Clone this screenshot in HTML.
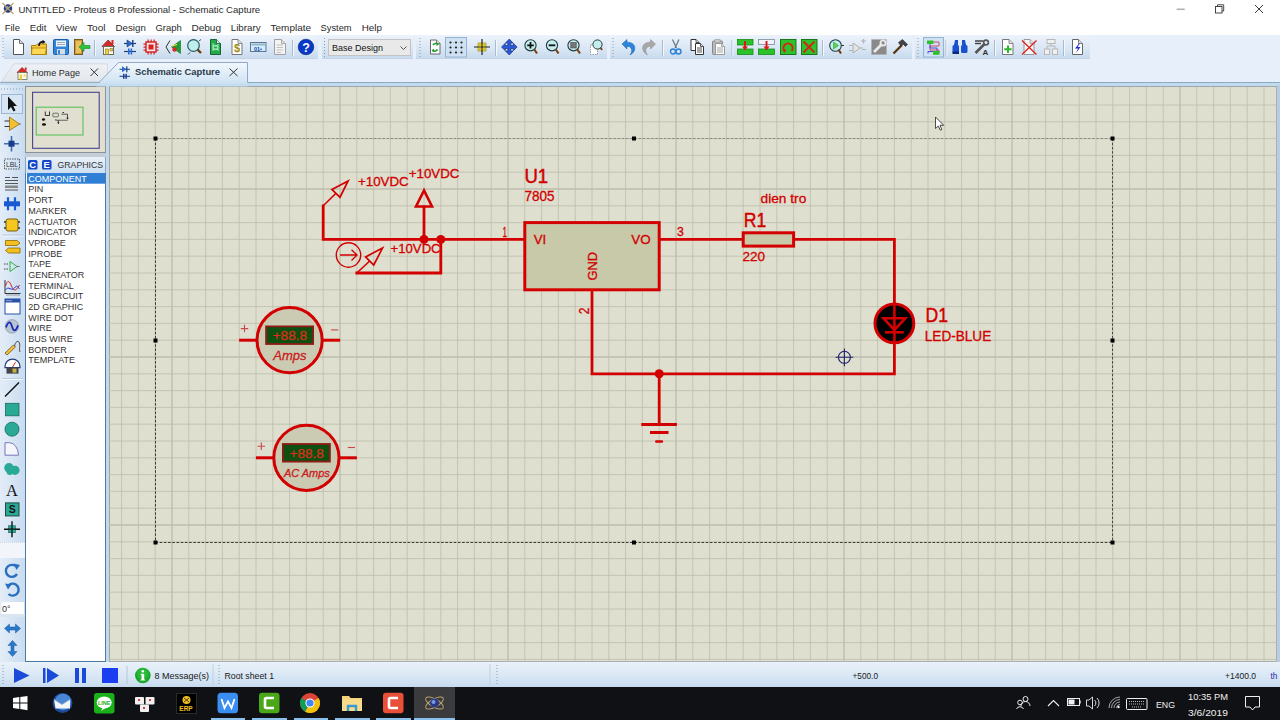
<!DOCTYPE html>
<html><head><meta charset="utf-8">
<style>
*{margin:0;padding:0;box-sizing:border-box}
html,body{width:1280px;height:720px;overflow:hidden;background:#fff;font-family:"Liberation Sans",sans-serif}
.a{position:absolute}
#title{left:0;top:0;width:1280px;height:17px;background:#fff}
#menu{left:0;top:17px;width:1280px;height:18px;background:#fff}
.mi{position:absolute;top:21px;font-size:9.7px;color:#1a1a1a;white-space:nowrap}
#rebar{left:0;top:35px;width:1280px;height:48px;background:#e7f0fa}
.band{position:absolute;top:35px;height:24px;background:linear-gradient(#edf3fb,#d9e6f4 60%,#c9dbee);border-bottom:1px solid #c4d4e6}
#frame{left:0;top:82px;width:1280px;height:5px;background:#c0daee;border-top:1px solid #8eaac2}
#lefttb{left:0;top:85px;width:25px;height:577px;background:linear-gradient(90deg,#e3edf8,#c9dcf0)}
#ovw{left:25px;top:86.3px;width:80.8px;height:66.7px;background:#e0dfd0;border:1px solid #8a9298}
#gap1{left:25px;top:153px;width:81px;height:4px;background:#c3ced8}
#ghead{left:25px;top:157px;width:81px;height:16px;background:linear-gradient(#e9f1f9,#cddff0);border-left:1px solid #8aa4c0;border-right:1px solid #8aa4c0}
#glist{left:25.2px;top:173px;width:80.6px;height:488.5px;background:#fff;border:1.6px solid #4f79a6;border-top:none}
#cgap{left:105.5px;top:85px;width:4px;height:578px;background:#c2d9eb}
#canvas{left:108.7px;top:86.3px;width:1168.5px;height:575.5px;background:#dfdfcf;border-left:1px solid #9ea6aa;border-top:1px solid #9ea6aa;border-bottom:1px solid #a8b0b4;border-right:1px solid #a8b0b4}
#rgap{left:1277px;top:85px;width:3px;height:578px;background:#b8cde3}
#status{left:0;top:662px;width:1280px;height:25px;background:linear-gradient(#eaf2fa,#d4e4f3 70%,#c6daee)}
#taskbar{left:0;top:687px;width:1280px;height:33px;background:#101114}
.li{position:absolute;left:3px;font-size:9.5px;color:#222;white-space:nowrap;line-height:10.68px}
</style></head><body>
<div id="title" class="a"></div>
<div id="menu" class="a"></div>
<div id="rebar" class="a"></div>
<div class="band" style="left:4px;width:314px"></div>
<div class="band" style="left:322px;width:91px"></div>
<div class="band" style="left:416px;width:191px"></div>
<div class="band" style="left:610px;width:302px"></div>
<div class="band" style="left:915px;width:175px"></div>
<svg class="a" style="left:0;top:0;font-family:'Liberation Sans',sans-serif" width="1280" height="720" viewBox="0 0 1280 720">
<line x1="3" y1="38" x2="3" y2="57" stroke="#8a9cb0" stroke-width="1" stroke-dasharray="1 2"/>
<g transform="translate(13,39)"><path d="M0.5 0.5 H6.5 L10.5 4.5 V15.5 H0.5 Z" fill="#fff" stroke="#555" stroke-width="1"/><path d="M6.5 0.5 V4.5 H10.5" fill="#ddd" stroke="#555" stroke-width="0.8"/></g>
<g transform="translate(31,39)"><path d="M0.5 6.5 H5 L6.5 5 H15.5 V15.5 H0.5 Z" fill="#f5c83a" stroke="#a8800a"/><path d="M1 9 H15.5 L14 15.5 H0.5 Z" fill="#ffd955" stroke="#a8800a" stroke-width="0.8"/><path d="M8 7 C8 3.5 10 2.5 12.5 3" fill="none" stroke="#111" stroke-width="1.6"/><path d="M11.5 0.8 L14.5 3 L11.5 5 Z" fill="#111"/></g>
<g transform="translate(53,39)"><rect x="0.5" y="0.5" width="15" height="15" rx="1" fill="#2f86d8" stroke="#1c5fa8"/><rect x="3" y="1.5" width="10" height="6" fill="#eef4fa"/><line x1="4" y1="3.5" x2="12" y2="3.5" stroke="#99aabb"/><line x1="4" y1="5.5" x2="12" y2="5.5" stroke="#99aabb"/><rect x="4" y="10" width="8" height="5.5" fill="#d8dde4"/><rect x="5" y="11" width="2" height="4" fill="#2f86d8"/></g>
<g transform="translate(74,39)"><rect x="0.5" y="0.5" width="8" height="15" fill="#c99a3a" stroke="#7a5a18"/><rect x="2" y="2" width="5" height="12" fill="#e8c060"/><path d="M5 8 L10 3.5 V6.5 H16 V9.5 H10 V12.5 Z" fill="#2cc23c" stroke="#168a22" stroke-width="0.6"/></g>
<line x1="94.5" y1="40" x2="94.5" y2="56" stroke="#a9bccf" stroke-width="1"/>
<line x1="95.5" y1="40" x2="95.5" y2="56" stroke="#f4f8fc" stroke-width="1"/>
<g transform="translate(102,39)"><path d="M0 7.5 L6.2 1 L12.5 7.5 Z" fill="#d42a2a" stroke="#901818" stroke-width="0.8"/><rect x="9.5" y="1" width="2" height="4" fill="#d42a2a"/><rect x="1.5" y="7.5" width="10" height="8" fill="#fffdf0" stroke="#6b6b5a"/><rect x="3.5" y="10" width="3" height="5.5" fill="#f0d040" stroke="#807030" stroke-width="0.6"/><rect x="8" y="9.5" width="2.5" height="2.5" fill="#f0d040" stroke="#807030" stroke-width="0.6"/></g>
<g transform="translate(124,39)"><line x1="0" y1="4.5" x2="12" y2="4.5" stroke="#1a3f7a" stroke-width="1.2"/><path d="M3 1 L3 8 L8.5 4.5 Z" fill="#2a6ad0" stroke="#1a3f7a" stroke-width="0.6"/><line x1="8.8" y1="1" x2="8.8" y2="8" stroke="#1a3f7a" stroke-width="1.4"/><line x1="0" y1="12.5" x2="12" y2="12.5" stroke="#1a3f7a" stroke-width="1.2"/><rect x="4" y="9.5" width="1.6" height="6" fill="#2a6ad0"/><rect x="6.6" y="9.5" width="1.6" height="6" fill="#2a6ad0"/></g>
<g transform="translate(143,39)"><rect x="3" y="3" width="10" height="10" fill="#fbe4e4" stroke="#d02020" stroke-width="1.4"/><rect x="5.5" y="5.5" width="5" height="5" fill="#d82020"/><rect x="4.5" y="0.5" width="1.2" height="2.5" fill="#d02020"/><rect x="4.5" y="13" width="1.2" height="2.5" fill="#d02020"/><rect x="0.5" y="4.5" width="2.5" height="1.2" fill="#d02020"/><rect x="13" y="4.5" width="2.5" height="1.2" fill="#d02020"/><rect x="7.5" y="0.5" width="1.2" height="2.5" fill="#d02020"/><rect x="7.5" y="13" width="1.2" height="2.5" fill="#d02020"/><rect x="0.5" y="7.5" width="2.5" height="1.2" fill="#d02020"/><rect x="13" y="7.5" width="2.5" height="1.2" fill="#d02020"/><rect x="10.5" y="0.5" width="1.2" height="2.5" fill="#d02020"/><rect x="10.5" y="13" width="1.2" height="2.5" fill="#d02020"/><rect x="0.5" y="10.5" width="2.5" height="1.2" fill="#d02020"/><rect x="13" y="10.5" width="2.5" height="1.2" fill="#d02020"/></g>
<g transform="translate(165,39)"><path d="M5 1.5 L1 8 L5 14.5" fill="none" stroke="#333" stroke-width="1"/><path d="M15.5 1.5 L6.5 8 L15.5 14.5 Z" fill="#1e9e32" stroke="#0e6e1e" stroke-width="0.6"/><circle cx="9.5" cy="10.5" r="2.2" fill="#d82a2a"/><path d="M7 7 L12 5.5" stroke="#ffe040" stroke-width="1.2"/></g>
<g transform="translate(187,39)"><circle cx="6.5" cy="6.5" r="5.8" fill="#bfeeee" stroke="#2a5a60" stroke-width="1.2"/><path d="M10.5 10.5 L14 14" stroke="#6a3a10" stroke-width="2.4"/><path d="M3 13.5 L1 15.5 M12 2 L14 0.5" stroke="#2a5a60" stroke-width="1"/></g>
<g transform="translate(210,39)"><path d="M0.5 0.5 H6.5 L10.5 4.5 V15.5 H0.5 Z" fill="#24a84a" stroke="#17663a" stroke-width="1"/><path d="M6.5 0.5 V4.5 H10.5" fill="#ddd" stroke="#17663a" stroke-width="0.8"/><path d="M3 4 V12 M8 5 V12 M3 7 H8 M3 10 H8" stroke="#a6f0c0" stroke-width="1"/><circle cx="5.5" cy="8.5" r="2.2" fill="none" stroke="#a6f0c0"/></g>
<g transform="translate(231.5,39)"><path d="M0.5 0.5 H6.5 L10.5 4.5 V15.5 H0.5 Z" fill="#fff" stroke="#777" stroke-width="1"/><path d="M6.5 0.5 V4.5 H10.5" fill="#ddd" stroke="#777" stroke-width="0.8"/><text x="5.5" y="13" font-size="11" font-weight="bold" fill="#a08a10" text-anchor="middle">$</text></g>
<g transform="translate(250,42)"><rect x="0.5" y="0.5" width="15.5" height="9" fill="#cfeeff" stroke="#5a7890"/><rect x="1.5" y="1.5" width="13.5" height="2" fill="#9ab4c8"/><text x="8" y="8.5" font-size="5.5" font-weight="bold" fill="#2040a0" text-anchor="middle">01&#8226;</text></g>
<g transform="translate(274,39)"><path d="M0.5 0.5 H7.5 L11.5 4.5 V15.5 H0.5 Z" fill="#f4f4f4" stroke="#a0a0a0" stroke-width="1"/><path d="M7.5 0.5 V4.5 H11.5" fill="#ddd" stroke="#a0a0a0" stroke-width="0.8"/><path d="M2.5 6 H9 M2.5 8.5 H9 M2.5 11 H9 M2.5 13.5 H7" stroke="#c0c0c0" stroke-width="1"/></g>
<line x1="292.5" y1="40" x2="292.5" y2="56" stroke="#a9bccf" stroke-width="1"/>
<line x1="293.5" y1="40" x2="293.5" y2="56" stroke="#f4f8fc" stroke-width="1"/>
<g transform="translate(298,39)"><circle cx="8" cy="8" r="7.8" fill="#0838c8" stroke="#06247a" stroke-width="0.6"/><text x="8" y="12.8" font-size="12.5" font-weight="bold" fill="#fff" text-anchor="middle">?</text></g>
<line x1="324.5" y1="38" x2="324.5" y2="57" stroke="#8a9cb0" stroke-width="1" stroke-dasharray="1 2"/>
<rect x="328.5" y="39.5" width="82" height="16" fill="#e9e9e9" stroke="#c4c4c4"/>
<text x="332" y="51" font-size="9" fill="#111" textLength="51" lengthAdjust="spacingAndGlyphs">Base Design</text>
<path d="M400.5 46.5 L403.5 49.5 L406.5 46.5" fill="none" stroke="#444" stroke-width="0.9"/>
<line x1="420" y1="38" x2="420" y2="57" stroke="#8a9cb0" stroke-width="1" stroke-dasharray="1 2"/>
<g transform="translate(430,39.5)"><path d="M0.5 0.5 H6.5 L10.0 4.0 V14.5 H0.5 Z" fill="#fff" stroke="#666" stroke-width="1"/><path d="M6.5 0.5 V4.0 H10.0" fill="#ddd" stroke="#666" stroke-width="0.8"/><path d="M3 5.5 A3.5 3.5 0 0 1 8 4.5" fill="none" stroke="#20a030" stroke-width="1.6"/><path d="M7.5 10 A3.5 3.5 0 0 1 2.5 11" fill="none" stroke="#20a030" stroke-width="1.6"/><path d="M6.5 3 L9 5 L6.5 6.5 Z M4 9 L1.5 11 L4 12.5 Z" fill="#20a030"/></g>
<rect x="445.5" y="37.5" width="21" height="19.5" fill="#cfe1f3" stroke="#94b4d4"/>
<g transform="translate(449,41)"><circle cx="1.5" cy="1.5" r="1.1" fill="#222"/><circle cx="1.5" cy="6.5" r="1.1" fill="#222"/><circle cx="1.5" cy="11.5" r="1.1" fill="#222"/><circle cx="7" cy="1.5" r="1.1" fill="#222"/><circle cx="7" cy="6.5" r="1.1" fill="#222"/><circle cx="7" cy="11.5" r="1.1" fill="#222"/><circle cx="12.5" cy="1.5" r="1.1" fill="#222"/><circle cx="12.5" cy="6.5" r="1.1" fill="#222"/><circle cx="12.5" cy="11.5" r="1.1" fill="#222"/><path d="M1.5 4 V4.2 M7 4 V4.2 M12.5 4 V4.2 M4.2 1.5 H4.4 M9.6 1.5 H9.8 M4.2 6.5 H4.4 M9.6 6.5 H9.8 M4.2 11.5 H4.4 M9.6 11.5 H9.8 M1.5 9 V9.2 M7 9 V9.2 M12.5 9 V9.2" stroke="#555" stroke-width="1"/></g>
<g transform="translate(474,39)"><rect x="4" y="4" width="8" height="8" fill="#f4e040" stroke="#908010" stroke-width="0.6"/><path d="M8 0 V16 M0 8 H16" stroke="#222" stroke-width="1.2"/><path d="M4 6 H12 M4 10 H12 M6 4 V12 M10 4 V12" stroke="#b0a020" stroke-width="0.5"/></g>
<line x1="495.5" y1="40" x2="495.5" y2="56" stroke="#a9bccf" stroke-width="1"/>
<line x1="496.5" y1="40" x2="496.5" y2="56" stroke="#f4f8fc" stroke-width="1"/>
<g transform="translate(501.5,39)"><path d="M7.8 0 L11.5 4 H9.3 V6.5 H11.8 V4.3 L15.6 8 L11.8 11.7 V9.5 H9.3 V12 H11.5 L7.8 16 L4 12 H6.3 V9.5 H3.8 V11.7 L0 8 L3.8 4.3 V6.5 H6.3 V4 H4 Z" fill="#2a5ad8" stroke="#142e80" stroke-width="0.7"/></g>
<g transform="translate(524,39)"><circle cx="6.5" cy="6.3" r="5.6" fill="#c4eeee" stroke="#213a3e" stroke-width="1.1"/><path d="M6.5 3 V9.6 M3.2 6.3 H9.8" stroke="#111" stroke-width="1.8"/><path d="M10 10 L13 14.5" stroke="#7a4418" stroke-width="2.2"/></g>
<g transform="translate(545.5,39)"><circle cx="6.5" cy="6.3" r="5.6" fill="#c4eeee" stroke="#213a3e" stroke-width="1.1"/><path d="M3.2 6.3 H9.8" stroke="#111" stroke-width="1.8"/><path d="M10 10 L13 14.5" stroke="#7a4418" stroke-width="2.2"/></g>
<g transform="translate(567,39)"><circle cx="6.5" cy="6.3" r="5.6" fill="#c4eeee" stroke="#213a3e" stroke-width="1.1"/><rect x="3.8" y="3.6" width="5.4" height="5.4" fill="#777" stroke="#444" stroke-width="0.6"/><path d="M10 10 L13 14.5" stroke="#7a4418" stroke-width="2.2"/></g>
<g transform="translate(590,39)"><rect x="0.5" y="6" width="7" height="9.5" fill="#fff" stroke="#888" stroke-width="0.8" stroke-dasharray="1.5 1"/><circle cx="7.5" cy="5.5" r="4.6" fill="#c4eeee" stroke="#213a3e" stroke-width="1"/><path d="M10.5 8.5 L12 11" stroke="#7a4418" stroke-width="1.8"/></g>
<line x1="613" y1="38" x2="613" y2="57" stroke="#8a9cb0" stroke-width="1" stroke-dasharray="1 2"/>
<g transform="translate(620,39)"><path d="M2 5 L7 0.5 V3.2 C12 3 16 6 14.5 11 C13.8 13.5 12 15 10 15.8 C12 13.5 12.5 10.5 10.5 8.5 C9.5 7.5 8 7.3 7 7.5 V10 Z" fill="#2a86d8" stroke="#1a5aa8" stroke-width="0.5"/></g>
<g transform="translate(641.5,39)"><path d="M14 5 L9 0.5 V3.2 C4 3 0 6 1.5 11 C2.2 13.5 4 15 6 15.8 C4 13.5 3.5 10.5 5.5 8.5 C6.5 7.5 8 7.3 9 7.5 V10 Z" fill="#a8a8a8" stroke="#888" stroke-width="0.5"/></g>
<line x1="662.5" y1="40" x2="662.5" y2="56" stroke="#a9bccf" stroke-width="1"/>
<line x1="663.5" y1="40" x2="663.5" y2="56" stroke="#f4f8fc" stroke-width="1"/>
<g transform="translate(670,39)"><path d="M2.5 0.5 L6.5 9 M9 0.5 L5 9" stroke="#6a7a8a" stroke-width="1.3"/><circle cx="3" cy="12.5" r="2.5" fill="none" stroke="#2a80d8" stroke-width="1.4"/><circle cx="8.5" cy="12.5" r="2.5" fill="none" stroke="#2a80d8" stroke-width="1.4"/></g>
<g transform="translate(690.5,39)"><path d="M0.5 0.5 H5.5 L8.5 3.5 V11.5 H0.5 Z" fill="#fff" stroke="#333" stroke-width="1"/><path d="M5.5 0.5 V3.5 H8.5" fill="#ddd" stroke="#333" stroke-width="0.8"/><g transform="translate(4.5,4)"><path d="M0.5 0.5 H5.5 L8.5 3.5 V11.5 H0.5 Z" fill="#fff" stroke="#333" stroke-width="1"/><path d="M5.5 0.5 V3.5 H8.5" fill="#ddd" stroke="#333" stroke-width="0.8"/><path d="M2 5 H7 M2 7 H7 M2 9 H7" stroke="#555"/></g></g>
<g transform="translate(712,39)"><rect x="0.5" y="2" width="10" height="13.5" rx="1" fill="#bbb" stroke="#888"/><rect x="3" y="0.5" width="5" height="3" fill="#ccc" stroke="#999" stroke-width="0.6"/><g transform="translate(3,4)"><path d="M0.5 0.5 H6.5 L9.5 3.5 V11.5 H0.5 Z" fill="#fafafa" stroke="#999" stroke-width="1"/><path d="M6.5 0.5 V3.5 H9.5" fill="#ddd" stroke="#999" stroke-width="0.8"/><path d="M2 5 H8 M2 7 H8 M2 9 H8" stroke="#aaa"/></g></g>
<line x1="732" y1="40" x2="732" y2="56" stroke="#a9bccf" stroke-width="1"/>
<line x1="733" y1="40" x2="733" y2="56" stroke="#f4f8fc" stroke-width="1"/>
<g transform="translate(737,39)"><rect x="0.5" y="0.5" width="15.5" height="5.5" fill="#2ac42a" stroke="#168a16" stroke-width="0.8"/><rect x="0.5" y="10" width="15.5" height="5.5" fill="#2ac42a" stroke="#168a16" stroke-width="0.8"/><path d="M7 2 H9 V7.5 H11 L8 11.5 L5 7.5 H7 Z" fill="#e01818"/></g>
<g transform="translate(758,39)"><rect x="0.5" y="0.5" width="16" height="5" fill="#f0f4f8" stroke="#7a8a9a" stroke-width="0.8"/><rect x="0.5" y="10" width="16" height="5.5" fill="#2ac42a" stroke="#168a16" stroke-width="0.8"/><path d="M7.5 2 H9.5 V7.5 H11.5 L8.5 11.5 L5.5 7.5 H7.5 Z" fill="#e01818"/></g>
<g transform="translate(780,39)"><rect x="0.5" y="0.5" width="15.5" height="15" fill="#2ac42a" stroke="#0e6e0e" stroke-width="0.9"/><path d="M4.5 12 A4.6 4.6 0 1 1 11.5 12" fill="none" stroke="#d82018" stroke-width="2"/><path d="M2.5 11 L4.8 14 L6.5 10.5 Z" fill="#d82018"/></g>
<g transform="translate(801,39)"><rect x="0.5" y="0.5" width="15.5" height="15" fill="#2ac42a" stroke="#0e6e0e" stroke-width="0.9"/><path d="M2.5 2.5 L13.5 13.5 M13.5 2.5 L2.5 13.5" stroke="#d82018" stroke-width="1.8"/></g>
<line x1="822.5" y1="40" x2="822.5" y2="56" stroke="#a9bccf" stroke-width="1"/>
<line x1="823.5" y1="40" x2="823.5" y2="56" stroke="#f4f8fc" stroke-width="1"/>
<g transform="translate(829,39)"><circle cx="6.5" cy="6.5" r="5.8" fill="#c4eeee" stroke="#213a3e" stroke-width="1.1"/><path d="M4.5 3 L9.5 6.5 L4.5 10 Z" fill="#5ad25a" stroke="#2a8a2a" stroke-width="0.5"/><path d="M12.5 6.5 H15" stroke="#333"/><path d="M9.5 10.5 L12 14.5" stroke="#6a3a10" stroke-width="2"/></g>
<g transform="translate(849,39)"><path d="M4 4 L11 9 L4 14 Z" fill="#e4e4e4" stroke="#b0b0b0"/><path d="M0 6.5 H4 M0 11.5 H4 M11 9 H14 M12 2 H17 M14.5 0 V4.5 M13 10.5 H17" stroke="#b4b4b4" stroke-width="1.2"/></g>
<g transform="translate(871,39)"><rect x="0.5" y="0.5" width="15" height="15" fill="#8a8a8a" stroke="#b0b0b0" stroke-dasharray="1 1"/><path d="M3 13 L11 5" stroke="#eaeaea" stroke-width="2.6"/><circle cx="12" cy="4" r="2.6" fill="none" stroke="#eaeaea" stroke-width="1.8"/></g>
<g transform="translate(892,39)"><path d="M1.5 14.5 L10 6" stroke="#5a3810" stroke-width="2.4"/><path d="M6.5 3.5 L10.5 0.5 L15.5 5.5 L13.5 7.5 L11 5 L9 7 Z" fill="#444" stroke="#222" stroke-width="0.6"/></g>
<line x1="918" y1="38" x2="918" y2="57" stroke="#8a9cb0" stroke-width="1" stroke-dasharray="1 2"/>
<rect x="923.5" y="37.5" width="20" height="19.5" fill="#cfe1f3" stroke="#94b4d4"/>
<g transform="translate(926,40)"><rect x="1" y="0.5" width="6.5" height="3.5" fill="#2ac42a"/><path d="M7.5 2 H13 V6 H4 V10 H13 V13" fill="none" stroke="#d24a6a" stroke-width="1"/><path d="M4 4 V8 H11 V11.5 H2 V13.5" fill="none" stroke="#4a4ad2" stroke-width="1"/><rect x="7" y="11" width="6.5" height="3.8" fill="#2ac42a"/></g>
<line x1="946" y1="40" x2="946" y2="56" stroke="#a9bccf" stroke-width="1"/>
<line x1="947" y1="40" x2="947" y2="56" stroke="#f4f8fc" stroke-width="1"/>
<g transform="translate(952,39)"><path d="M3 1 H6 V6 H2 Z M10 1 H13 L14 6 H10 Z" fill="#1a50d0"/><rect x="0.5" y="6" width="6.5" height="8" rx="1.5" fill="#1a50d0"/><rect x="9" y="6" width="6.5" height="8" rx="1.5" fill="#1a50d0"/><rect x="0.5" y="12.5" width="6.5" height="2.5" fill="#0a2a80"/></g>
<g transform="translate(974,39)"><path d="M1 2 H9 M1 4.5 H7" stroke="#444" stroke-width="1.3"/><path d="M1.5 14 L11 4.5" stroke="#555" stroke-width="2.6"/><circle cx="12" cy="3.5" r="2.4" fill="none" stroke="#555" stroke-width="1.6"/><text x="11.5" y="15.5" font-size="8" font-weight="bold" fill="#333" text-anchor="middle">A</text></g>
<line x1="994.5" y1="40" x2="994.5" y2="56" stroke="#a9bccf" stroke-width="1"/>
<line x1="995.5" y1="40" x2="995.5" y2="56" stroke="#f4f8fc" stroke-width="1"/>
<g transform="translate(1002,39)"><path d="M0.5 0.5 H7.0 L11.0 4.5 V15.5 H0.5 Z" fill="#fff" stroke="#777" stroke-width="1"/><path d="M7.0 0.5 V4.5 H11.0" fill="#ddd" stroke="#777" stroke-width="0.8"/><path d="M6 6.5 V14 M2.3 10.2 H9.7" stroke="#2ab82a" stroke-width="2"/></g>
<g transform="translate(1021.5,39)"><g transform="translate(2,0)"><path d="M0.5 0.5 H6.5 L10.5 4.5 V15.5 H0.5 Z" fill="#f6f6f6" stroke="#999" stroke-width="1"/><path d="M6.5 0.5 V4.5 H10.5" fill="#ddd" stroke="#999" stroke-width="0.8"/></g><path d="M0.5 1.5 L15 15.5 M15 1.5 L0.5 15.5" stroke="#e02020" stroke-width="1.3"/></g>
<g transform="translate(1044,39)"><rect x="3" y="0.5" width="8" height="4" fill="#f0f0f0" stroke="#b8b8b8"/><rect x="0.5" y="10" width="5" height="5.5" fill="#f0f0f0" stroke="#b8b8b8"/><rect x="8.5" y="10" width="5" height="5.5" fill="#f0f0f0" stroke="#b8b8b8"/><path d="M3 10 V7 H11 V10 M7 4.5 V7" fill="none" stroke="#b8b8b8"/></g>
<line x1="1063.5" y1="40" x2="1063.5" y2="56" stroke="#a9bccf" stroke-width="1"/>
<line x1="1064.5" y1="40" x2="1064.5" y2="56" stroke="#f4f8fc" stroke-width="1"/>
<g transform="translate(1072,39)"><path d="M0.5 0.5 H6.5 L10.5 4.5 V15.5 H0.5 Z" fill="#fff" stroke="#666" stroke-width="1"/><path d="M6.5 0.5 V4.5 H10.5" fill="#ddd" stroke="#666" stroke-width="0.8"/><path d="M7 4.5 L3 9.5 H6 L4 14 L8.5 8 H5.5 L8 4.5 Z" fill="#1a2ad8"/></g>
</svg>
<div id="frame" class="a"></div>
<div id="lefttb" class="a"></div>
<div id="ovw" class="a"></div>
<div id="gap1" class="a"></div>
<div id="ghead" class="a"></div>
<div id="glist" class="a"></div>
<div id="cgap" class="a"></div>
<div id="canvas" class="a"></div>
<svg class="a" style="left:0;top:0;font-family:'Liberation Sans',sans-serif" width="1280" height="720" viewBox="0 0 1280 720">
<defs><clipPath id="cc"><rect x="109" y="87" width="1168" height="575"/></clipPath></defs>
<g clip-path="url(#cc)">
<line x1="121.60" y1="87" x2="121.60" y2="662" stroke="#bdbdad" stroke-width="0.8"/>
<line x1="138.40" y1="87" x2="138.40" y2="662" stroke="#bdbdad" stroke-width="0.8"/>
<line x1="155.20" y1="87" x2="155.20" y2="662" stroke="#bdbdad" stroke-width="0.8"/>
<line x1="172.00" y1="87" x2="172.00" y2="662" stroke="#bebeae" stroke-width="1.4"/>
<line x1="188.80" y1="87" x2="188.80" y2="662" stroke="#bdbdad" stroke-width="0.8"/>
<line x1="205.60" y1="87" x2="205.60" y2="662" stroke="#bdbdad" stroke-width="0.8"/>
<line x1="222.40" y1="87" x2="222.40" y2="662" stroke="#bdbdad" stroke-width="0.8"/>
<line x1="239.20" y1="87" x2="239.20" y2="662" stroke="#bdbdad" stroke-width="0.8"/>
<line x1="256.00" y1="87" x2="256.00" y2="662" stroke="#bdbdad" stroke-width="0.8"/>
<line x1="272.80" y1="87" x2="272.80" y2="662" stroke="#bdbdad" stroke-width="0.8"/>
<line x1="289.60" y1="87" x2="289.60" y2="662" stroke="#bdbdad" stroke-width="0.8"/>
<line x1="306.40" y1="87" x2="306.40" y2="662" stroke="#bdbdad" stroke-width="0.8"/>
<line x1="323.20" y1="87" x2="323.20" y2="662" stroke="#bdbdad" stroke-width="0.8"/>
<line x1="340.00" y1="87" x2="340.00" y2="662" stroke="#bebeae" stroke-width="1.4"/>
<line x1="356.80" y1="87" x2="356.80" y2="662" stroke="#bdbdad" stroke-width="0.8"/>
<line x1="373.60" y1="87" x2="373.60" y2="662" stroke="#bdbdad" stroke-width="0.8"/>
<line x1="390.40" y1="87" x2="390.40" y2="662" stroke="#bdbdad" stroke-width="0.8"/>
<line x1="407.20" y1="87" x2="407.20" y2="662" stroke="#bdbdad" stroke-width="0.8"/>
<line x1="424.00" y1="87" x2="424.00" y2="662" stroke="#bdbdad" stroke-width="0.8"/>
<line x1="440.80" y1="87" x2="440.80" y2="662" stroke="#bdbdad" stroke-width="0.8"/>
<line x1="457.60" y1="87" x2="457.60" y2="662" stroke="#bdbdad" stroke-width="0.8"/>
<line x1="474.40" y1="87" x2="474.40" y2="662" stroke="#bdbdad" stroke-width="0.8"/>
<line x1="491.20" y1="87" x2="491.20" y2="662" stroke="#bdbdad" stroke-width="0.8"/>
<line x1="508.00" y1="87" x2="508.00" y2="662" stroke="#bebeae" stroke-width="1.4"/>
<line x1="524.80" y1="87" x2="524.80" y2="662" stroke="#bdbdad" stroke-width="0.8"/>
<line x1="541.60" y1="87" x2="541.60" y2="662" stroke="#bdbdad" stroke-width="0.8"/>
<line x1="558.40" y1="87" x2="558.40" y2="662" stroke="#bdbdad" stroke-width="0.8"/>
<line x1="575.20" y1="87" x2="575.20" y2="662" stroke="#bdbdad" stroke-width="0.8"/>
<line x1="592.00" y1="87" x2="592.00" y2="662" stroke="#bdbdad" stroke-width="0.8"/>
<line x1="608.80" y1="87" x2="608.80" y2="662" stroke="#bdbdad" stroke-width="0.8"/>
<line x1="625.60" y1="87" x2="625.60" y2="662" stroke="#bdbdad" stroke-width="0.8"/>
<line x1="642.40" y1="87" x2="642.40" y2="662" stroke="#bdbdad" stroke-width="0.8"/>
<line x1="659.20" y1="87" x2="659.20" y2="662" stroke="#bdbdad" stroke-width="0.8"/>
<line x1="676.00" y1="87" x2="676.00" y2="662" stroke="#bebeae" stroke-width="1.4"/>
<line x1="692.80" y1="87" x2="692.80" y2="662" stroke="#bdbdad" stroke-width="0.8"/>
<line x1="709.60" y1="87" x2="709.60" y2="662" stroke="#bdbdad" stroke-width="0.8"/>
<line x1="726.40" y1="87" x2="726.40" y2="662" stroke="#bdbdad" stroke-width="0.8"/>
<line x1="743.20" y1="87" x2="743.20" y2="662" stroke="#bdbdad" stroke-width="0.8"/>
<line x1="760.00" y1="87" x2="760.00" y2="662" stroke="#bdbdad" stroke-width="0.8"/>
<line x1="776.80" y1="87" x2="776.80" y2="662" stroke="#bdbdad" stroke-width="0.8"/>
<line x1="793.60" y1="87" x2="793.60" y2="662" stroke="#bdbdad" stroke-width="0.8"/>
<line x1="810.40" y1="87" x2="810.40" y2="662" stroke="#bdbdad" stroke-width="0.8"/>
<line x1="827.20" y1="87" x2="827.20" y2="662" stroke="#bdbdad" stroke-width="0.8"/>
<line x1="844.00" y1="87" x2="844.00" y2="662" stroke="#bebeae" stroke-width="1.4"/>
<line x1="860.80" y1="87" x2="860.80" y2="662" stroke="#bdbdad" stroke-width="0.8"/>
<line x1="877.60" y1="87" x2="877.60" y2="662" stroke="#bdbdad" stroke-width="0.8"/>
<line x1="894.40" y1="87" x2="894.40" y2="662" stroke="#bdbdad" stroke-width="0.8"/>
<line x1="911.20" y1="87" x2="911.20" y2="662" stroke="#bdbdad" stroke-width="0.8"/>
<line x1="928.00" y1="87" x2="928.00" y2="662" stroke="#bdbdad" stroke-width="0.8"/>
<line x1="944.80" y1="87" x2="944.80" y2="662" stroke="#bdbdad" stroke-width="0.8"/>
<line x1="961.60" y1="87" x2="961.60" y2="662" stroke="#bdbdad" stroke-width="0.8"/>
<line x1="978.40" y1="87" x2="978.40" y2="662" stroke="#bdbdad" stroke-width="0.8"/>
<line x1="995.20" y1="87" x2="995.20" y2="662" stroke="#bdbdad" stroke-width="0.8"/>
<line x1="1012.00" y1="87" x2="1012.00" y2="662" stroke="#bebeae" stroke-width="1.4"/>
<line x1="1028.80" y1="87" x2="1028.80" y2="662" stroke="#bdbdad" stroke-width="0.8"/>
<line x1="1045.60" y1="87" x2="1045.60" y2="662" stroke="#bdbdad" stroke-width="0.8"/>
<line x1="1062.40" y1="87" x2="1062.40" y2="662" stroke="#bdbdad" stroke-width="0.8"/>
<line x1="1079.20" y1="87" x2="1079.20" y2="662" stroke="#bdbdad" stroke-width="0.8"/>
<line x1="1096.00" y1="87" x2="1096.00" y2="662" stroke="#bdbdad" stroke-width="0.8"/>
<line x1="1112.80" y1="87" x2="1112.80" y2="662" stroke="#bdbdad" stroke-width="0.8"/>
<line x1="1129.60" y1="87" x2="1129.60" y2="662" stroke="#bdbdad" stroke-width="0.8"/>
<line x1="1146.40" y1="87" x2="1146.40" y2="662" stroke="#bdbdad" stroke-width="0.8"/>
<line x1="1163.20" y1="87" x2="1163.20" y2="662" stroke="#bdbdad" stroke-width="0.8"/>
<line x1="1180.00" y1="87" x2="1180.00" y2="662" stroke="#bebeae" stroke-width="1.4"/>
<line x1="1196.80" y1="87" x2="1196.80" y2="662" stroke="#bdbdad" stroke-width="0.8"/>
<line x1="1213.60" y1="87" x2="1213.60" y2="662" stroke="#bdbdad" stroke-width="0.8"/>
<line x1="1230.40" y1="87" x2="1230.40" y2="662" stroke="#bdbdad" stroke-width="0.8"/>
<line x1="1247.20" y1="87" x2="1247.20" y2="662" stroke="#bdbdad" stroke-width="0.8"/>
<line x1="1264.00" y1="87" x2="1264.00" y2="662" stroke="#bdbdad" stroke-width="0.8"/>
<line x1="109" y1="105.00" x2="1277" y2="105.00" stroke="#bdbdad" stroke-width="0.8"/>
<line x1="109" y1="121.80" x2="1277" y2="121.80" stroke="#bdbdad" stroke-width="0.8"/>
<line x1="109" y1="138.60" x2="1277" y2="138.60" stroke="#bdbdad" stroke-width="0.8"/>
<line x1="109" y1="155.40" x2="1277" y2="155.40" stroke="#bdbdad" stroke-width="0.8"/>
<line x1="109" y1="172.20" x2="1277" y2="172.20" stroke="#bdbdad" stroke-width="0.8"/>
<line x1="109" y1="189.00" x2="1277" y2="189.00" stroke="#bebeae" stroke-width="1.3"/>
<line x1="109" y1="205.80" x2="1277" y2="205.80" stroke="#bdbdad" stroke-width="0.8"/>
<line x1="109" y1="222.60" x2="1277" y2="222.60" stroke="#bdbdad" stroke-width="0.8"/>
<line x1="109" y1="239.40" x2="1277" y2="239.40" stroke="#bdbdad" stroke-width="0.8"/>
<line x1="109" y1="256.20" x2="1277" y2="256.20" stroke="#bdbdad" stroke-width="0.8"/>
<line x1="109" y1="273.00" x2="1277" y2="273.00" stroke="#bdbdad" stroke-width="0.8"/>
<line x1="109" y1="289.80" x2="1277" y2="289.80" stroke="#bdbdad" stroke-width="0.8"/>
<line x1="109" y1="306.60" x2="1277" y2="306.60" stroke="#bdbdad" stroke-width="0.8"/>
<line x1="109" y1="323.40" x2="1277" y2="323.40" stroke="#bdbdad" stroke-width="0.8"/>
<line x1="109" y1="340.20" x2="1277" y2="340.20" stroke="#bdbdad" stroke-width="0.8"/>
<line x1="109" y1="357.00" x2="1277" y2="357.00" stroke="#bebeae" stroke-width="1.3"/>
<line x1="109" y1="373.80" x2="1277" y2="373.80" stroke="#bdbdad" stroke-width="0.8"/>
<line x1="109" y1="390.60" x2="1277" y2="390.60" stroke="#bdbdad" stroke-width="0.8"/>
<line x1="109" y1="407.40" x2="1277" y2="407.40" stroke="#bdbdad" stroke-width="0.8"/>
<line x1="109" y1="424.20" x2="1277" y2="424.20" stroke="#bdbdad" stroke-width="0.8"/>
<line x1="109" y1="441.00" x2="1277" y2="441.00" stroke="#bdbdad" stroke-width="0.8"/>
<line x1="109" y1="457.80" x2="1277" y2="457.80" stroke="#bdbdad" stroke-width="0.8"/>
<line x1="109" y1="474.60" x2="1277" y2="474.60" stroke="#bdbdad" stroke-width="0.8"/>
<line x1="109" y1="491.40" x2="1277" y2="491.40" stroke="#bdbdad" stroke-width="0.8"/>
<line x1="109" y1="508.20" x2="1277" y2="508.20" stroke="#bdbdad" stroke-width="0.8"/>
<line x1="109" y1="525.00" x2="1277" y2="525.00" stroke="#bebeae" stroke-width="1.3"/>
<line x1="109" y1="541.80" x2="1277" y2="541.80" stroke="#bdbdad" stroke-width="0.8"/>
<line x1="109" y1="558.60" x2="1277" y2="558.60" stroke="#bdbdad" stroke-width="0.8"/>
<line x1="109" y1="575.40" x2="1277" y2="575.40" stroke="#bdbdad" stroke-width="0.8"/>
<line x1="109" y1="592.20" x2="1277" y2="592.20" stroke="#bdbdad" stroke-width="0.8"/>
<line x1="109" y1="609.00" x2="1277" y2="609.00" stroke="#bdbdad" stroke-width="0.8"/>
<line x1="109" y1="625.80" x2="1277" y2="625.80" stroke="#bdbdad" stroke-width="0.8"/>
<line x1="109" y1="642.60" x2="1277" y2="642.60" stroke="#bdbdad" stroke-width="0.8"/>
<line x1="109" y1="659.40" x2="1277" y2="659.40" stroke="#bdbdad" stroke-width="0.8"/>
<line x1="155.5" y1="138.5" x2="1112.5" y2="138.5" stroke="#8c8c84" stroke-width="1" stroke-dasharray="2.6 1.6"/>
<line x1="155.5" y1="542.5" x2="1112.5" y2="542.5" stroke="#3c3c36" stroke-width="1" stroke-dasharray="2.6 1.6"/>
<line x1="155.5" y1="138.5" x2="155.5" y2="542.5" stroke="#3c3c36" stroke-width="1" stroke-dasharray="2.6 1.6"/>
<line x1="1112.5" y1="138.5" x2="1112.5" y2="542.5" stroke="#4a4a44" stroke-width="1" stroke-dasharray="2.6 1.6"/>
<rect x="153.50" y="136.50" width="4" height="4" fill="#000"/>
<rect x="153.50" y="338.50" width="4" height="4" fill="#000"/>
<rect x="153.50" y="540.50" width="4" height="4" fill="#000"/>
<rect x="632.00" y="136.50" width="4" height="4" fill="#000"/>
<rect x="632.00" y="540.50" width="4" height="4" fill="#000"/>
<rect x="1110.50" y="136.50" width="4" height="4" fill="#000"/>
<rect x="1110.50" y="338.50" width="4" height="4" fill="#000"/>
<rect x="1110.50" y="540.50" width="4" height="4" fill="#000"/>
<polyline points="323.20,205.80 323.20,239.40 524.80,239.40" fill="none" stroke="#d20000" stroke-width="2.8" stroke-linejoin="miter" stroke-linecap="square"/>
<polyline points="424.00,239.40 424.00,207.00" fill="none" stroke="#d20000" stroke-width="2.8" stroke-linejoin="miter" stroke-linecap="square"/>
<polyline points="440.80,239.40 440.80,273.00 356.80,273.00" fill="none" stroke="#d20000" stroke-width="2.8" stroke-linejoin="miter" stroke-linecap="square"/>
<polyline points="659.20,239.40 743.20,239.40" fill="none" stroke="#d20000" stroke-width="2.8" stroke-linejoin="miter" stroke-linecap="square"/>
<polyline points="793.60,239.40 894.40,239.40 894.40,373.80 592.00,373.80 592.00,289.80" fill="none" stroke="#d20000" stroke-width="2.8" stroke-linejoin="miter" stroke-linecap="square"/>
<polyline points="659.20,373.80 659.20,424.40" fill="none" stroke="#d20000" stroke-width="2.8" stroke-linejoin="miter" stroke-linecap="square"/>
<line x1="641.3" y1="424.4" x2="676.9" y2="424.4" stroke="#d20000" stroke-width="3"/>
<line x1="650" y1="432.5" x2="668.5" y2="432.5" stroke="#d20000" stroke-width="3"/>
<line x1="656.3" y1="441.5" x2="661.9" y2="441.5" stroke="#d20000" stroke-width="2.5" stroke-linecap="round"/>
<circle cx="424.00" cy="239.40" r="4.5" fill="#d20000"/>
<circle cx="440.80" cy="239.40" r="4.5" fill="#d20000"/>
<circle cx="659.20" cy="373.80" r="4.5" fill="#d20000"/>
<line x1="323.20" y1="205.80" x2="336" y2="193.3" stroke="#d20000" stroke-width="1.6"/>
<polygon points="331.9,189.4 348.1,181 340,197.25" fill="none" stroke="#d20000" stroke-width="1.7" stroke-linejoin="miter"/>
<line x1="356.80" y1="273.00" x2="369.7" y2="261" stroke="#d20000" stroke-width="1.6"/>
<polygon points="365.6,256.9 382.5,248.1 373.75,265" fill="none" stroke="#d20000" stroke-width="1.7" stroke-linejoin="miter"/>
<polygon points="424.00,190.5 416,206.5 432,206.5" fill="none" stroke="#d20000" stroke-width="2.6"/>
<circle cx="348.5" cy="255" r="12.2" fill="none" stroke="#d20000" stroke-width="1.4"/>
<path d="M340 255 H357 M351.5 249.8 L357 255 L351.5 260.5" fill="none" stroke="#d20000" stroke-width="1.4"/>
<rect x="524.80" y="222.60" width="134.40" height="67.20" fill="#c8c9a9" stroke="#d20000" stroke-width="3"/>
<rect x="743.20" y="232.8" width="50.40" height="13.3" fill="#c8c9a9" stroke="#d20000" stroke-width="3"/>
<circle cx="894.40" cy="323.4" r="19.4" fill="#000" stroke="#d20000" stroke-width="3"/>
<line x1="894.40" y1="304" x2="894.40" y2="343" stroke="#d20000" stroke-width="2.6"/>
<polygon points="883.5,318.2 905.3,318.2 894.40,330" fill="none" stroke="#d20000" stroke-width="2.6"/>
<line x1="885" y1="332.3" x2="903.8" y2="332.3" stroke="#d20000" stroke-width="2.6"/>
<line x1="239.10" y1="340.20" x2="256.60" y2="340.20" stroke="#d20000" stroke-width="3"/>
<line x1="322.60" y1="340.20" x2="340.10" y2="340.20" stroke="#d20000" stroke-width="3"/>
<circle cx="289.60" cy="340.20" r="32.6" fill="#cbcab2" stroke="#d20000" stroke-width="3"/>
<rect x="266.10" y="326.40" width="47" height="17.6" fill="#0e4f12" stroke="#8e1c14" stroke-width="1.8"/>
<text x="272.70" y="340.40" font-size="13.5" fill="#d83018" stroke="#d83018" stroke-width="0.3" style="" textLength="34.40" lengthAdjust="spacingAndGlyphs" >+88.8</text>
<path d="M240.80 328.60 H248.20 M244.50 324.80 V332.30" stroke="#c84848" stroke-width="1.1" fill="none"/>
<line x1="331.00" y1="329.90" x2="338.20" y2="329.90" stroke="#c84848" stroke-width="1.1"/>
<text x="273.35" y="360.30" font-size="13" fill="#c82020" stroke="#c82020" stroke-width="0.3" style="font-style:italic;" textLength="33.25" lengthAdjust="spacingAndGlyphs" >Amps</text>
<line x1="255.90" y1="457.80" x2="273.40" y2="457.80" stroke="#d20000" stroke-width="3"/>
<line x1="339.40" y1="457.80" x2="356.90" y2="457.80" stroke="#d20000" stroke-width="3"/>
<circle cx="306.40" cy="457.80" r="32.6" fill="#cbcab2" stroke="#d20000" stroke-width="3"/>
<rect x="282.90" y="444.00" width="47" height="17.6" fill="#0e4f12" stroke="#8e1c14" stroke-width="1.8"/>
<text x="289.50" y="458.00" font-size="13.5" fill="#d83018" stroke="#d83018" stroke-width="0.3" style="" textLength="34.40" lengthAdjust="spacingAndGlyphs" >+88.8</text>
<path d="M257.60 446.20 H265.00 M261.30 442.40 V449.90" stroke="#c84848" stroke-width="1.1" fill="none"/>
<line x1="347.80" y1="447.50" x2="355.00" y2="447.50" stroke="#c84848" stroke-width="1.1"/>
<text x="283.95" y="477.20" font-size="11" fill="#c82020" stroke="#c82020" stroke-width="0.3" style="font-style:italic;" textLength="45.85" lengthAdjust="spacingAndGlyphs" >AC Amps</text>
<text x="358.00" y="185.60" font-size="13.5" fill="#d20000" stroke="#d20000" stroke-width="0.3" style="" textLength="50.75" lengthAdjust="spacingAndGlyphs" >+10VDC</text>
<text x="408.75" y="177.75" font-size="13.5" fill="#d20000" stroke="#d20000" stroke-width="0.3" style="" textLength="50.65" lengthAdjust="spacingAndGlyphs" >+10VDC</text>
<text x="390.60" y="253.10" font-size="13.5" fill="#d20000" stroke="#d20000" stroke-width="0.3" style="" textLength="50.00" lengthAdjust="spacingAndGlyphs" >+10VDC</text>
<text x="524.40" y="182.50" font-size="20.5" fill="#d20000" stroke="#d20000" stroke-width="0.45" style="" textLength="23.71" lengthAdjust="spacingAndGlyphs" >U1</text>
<text x="524.40" y="201.00" font-size="13.8" fill="#d20000" stroke="#d20000" stroke-width="0.3" style="" textLength="29.99" lengthAdjust="spacingAndGlyphs" >7805</text>
<text x="502.40" y="236.60" font-size="14" fill="#d20000" stroke="#d20000" stroke-width="0.3" style="" textLength="4.50" lengthAdjust="spacingAndGlyphs" >1</text>
<text x="533.75" y="244.40" font-size="13.6" fill="#d20000" stroke="#d20000" stroke-width="0.3" style="" textLength="12.50" lengthAdjust="spacingAndGlyphs" >VI</text>
<text x="631.25" y="244.40" font-size="13.6" fill="#d20000" stroke="#d20000" stroke-width="0.3" style="" textLength="19.35" lengthAdjust="spacingAndGlyphs" >VO</text>
<text x="676.90" y="236.40" font-size="13.2" fill="#d20000" stroke="#d20000" stroke-width="0.3" style="" textLength="6.85" lengthAdjust="spacingAndGlyphs" >3</text>
<g transform="translate(597.4,280.6) rotate(-90)">
<text x="0.00" y="0.00" font-size="13.3" fill="#d20000" stroke="#d20000" stroke-width="0.3" style="" textLength="28.70" lengthAdjust="spacingAndGlyphs" >GND</text>
</g>
<g transform="translate(589.2,314.2) rotate(-90)">
<text x="0.00" y="0.00" font-size="14.5" fill="#d20000" stroke="#d20000" stroke-width="0.3" style="" textLength="6.70" lengthAdjust="spacingAndGlyphs" >2</text>
</g>
<text x="743.75" y="227.25" font-size="20.3" fill="#d20000" stroke="#d20000" stroke-width="0.45" style="" textLength="22.51" lengthAdjust="spacingAndGlyphs" >R1</text>
<text x="760.60" y="202.50" font-size="13.2" fill="#d20000" stroke="#d20000" stroke-width="0.3" style="" textLength="45.66" lengthAdjust="spacingAndGlyphs" >dien tro</text>
<text x="742.50" y="260.60" font-size="13.6" fill="#d20000" stroke="#d20000" stroke-width="0.3" style="" textLength="22.51" lengthAdjust="spacingAndGlyphs" >220</text>
<text x="925.60" y="321.90" font-size="20.5" fill="#d20000" stroke="#d20000" stroke-width="0.45" style="" textLength="22.51" lengthAdjust="spacingAndGlyphs" >D1</text>
<text x="924.75" y="340.60" font-size="13.8" fill="#d20000" stroke="#d20000" stroke-width="0.3" style="" textLength="66.50" lengthAdjust="spacingAndGlyphs" >LED-BLUE</text>
<g stroke="#23236e" fill="none" stroke-width="1.1"><circle cx="844.4" cy="357.3" r="6"/><path d="M835.5 357.3 H853.3 M844.4 348.4 V366.2"/></g>
<path d="M935.5 117 L935.5 128.5 L938.3 126 L940.3 130.2 L941.8 129.5 L940 125.3 L943.7 125.3 Z" fill="#fff" stroke="#222" stroke-width="0.8"/>
</g>
</svg>
<div id="rgap" class="a"></div>
<div id="status" class="a"></div>
<div id="taskbar" class="a"></div>
<svg class="a" style="left:0;top:0;font-family:'Liberation Sans',sans-serif" width="1280" height="720" viewBox="0 0 1280 720">
<text x="18.40" y="13.30" font-size="9.6" fill="#2a2a2a" textLength="241.80" lengthAdjust="spacingAndGlyphs" >UNTITLED - Proteus 8 Professional - Schematic Capture</text>
<text x="4.70" y="31.25" font-size="9.8" fill="#2a2a2a" textLength="15.30" lengthAdjust="spacingAndGlyphs" >File</text>
<text x="29.70" y="31.25" font-size="9.8" fill="#2a2a2a" textLength="16.70" lengthAdjust="spacingAndGlyphs" >Edit</text>
<text x="56.00" y="31.25" font-size="9.8" fill="#2a2a2a" textLength="20.97" lengthAdjust="spacingAndGlyphs" >View</text>
<text x="87.00" y="31.25" font-size="9.8" fill="#2a2a2a" textLength="18.50" lengthAdjust="spacingAndGlyphs" >Tool</text>
<text x="115.60" y="31.25" font-size="9.8" fill="#2a2a2a" textLength="30.20" lengthAdjust="spacingAndGlyphs" >Design</text>
<text x="155.50" y="31.25" font-size="9.8" fill="#2a2a2a" textLength="26.20" lengthAdjust="spacingAndGlyphs" >Graph</text>
<text x="191.40" y="31.25" font-size="9.8" fill="#2a2a2a" textLength="29.60" lengthAdjust="spacingAndGlyphs" >Debug</text>
<text x="230.80" y="31.25" font-size="9.8" fill="#2a2a2a" textLength="29.70" lengthAdjust="spacingAndGlyphs" >Library</text>
<text x="270.60" y="31.25" font-size="9.8" fill="#2a2a2a" textLength="40.40" lengthAdjust="spacingAndGlyphs" >Template</text>
<text x="320.60" y="31.25" font-size="9.8" fill="#2a2a2a" textLength="31.00" lengthAdjust="spacingAndGlyphs" >System</text>
<text x="361.70" y="31.25" font-size="9.8" fill="#2a2a2a" textLength="20.30" lengthAdjust="spacingAndGlyphs" >Help</text>
<g transform="translate(2,2)"><circle cx="6" cy="6.5" r="4.2" fill="#2a3a78"/><circle cx="5" cy="5.5" r="1.8" fill="#6a8ad8"/><path d="M0.5 1 L11.5 12 M11.5 1 L0.5 12" stroke="#b8a070" stroke-width="1.1"/></g>
<path d="M1176.7 9.2 H1184.8" stroke="#888" stroke-width="1"/>
<rect x="1215.5" y="6.5" width="6.5" height="6.5" fill="none" stroke="#333" stroke-width="0.9"/><path d="M1217.5 6.5 V4.8 H1223.7 V11 H1222" fill="none" stroke="#333" stroke-width="0.9"/>
<path d="M1255 5 L1263 13 M1263 5 L1255 13" stroke="#222" stroke-width="0.9"/>
<defs><linearGradient id="tabact" x1="0" y1="0" x2="0" y2="1"><stop offset="0" stop-color="#f2f7fc"/><stop offset="0.75" stop-color="#d4e6f5"/><stop offset="1" stop-color="#c0daee"/></linearGradient><linearGradient id="tabin" x1="0" y1="0" x2="0" y2="1"><stop offset="0" stop-color="#eef1f5"/><stop offset="1" stop-color="#e2e7ec"/></linearGradient><linearGradient id="ltb" x1="0" y1="0" x2="1" y2="0"><stop offset="0" stop-color="#e6eff9"/><stop offset="1" stop-color="#c2d7ed"/></linearGradient></defs>
<path d="M1 82.5 L14 63.8 H107.5 V82.5 Z" fill="url(#tabin)" stroke="#d4dae0" stroke-width="1"/><line x1="1" y1="82.3" x2="100" y2="82.3" stroke="#8aa0b8" stroke-width="1"/>
<path d="M96 86.5 L118.5 62.5 H247.5 V86.5 Z" fill="url(#tabact)" stroke="none"/><path d="M99 82.5 L118.5 62.5 H247.5 V82.5" fill="none" stroke="#8fa9c6" stroke-width="1"/>
<g transform="translate(17,67)"><path d="M0 5.5 L5 0.5 L10.5 5.5 Z" fill="#d42a2a" stroke="#901818" stroke-width="0.6"/><rect x="7.8" y="0.5" width="1.8" height="3" fill="#d42a2a"/><rect x="1" y="5.5" width="9" height="7" fill="#fffdf0" stroke="#6b6b5a" stroke-width="0.8"/><rect x="2.5" y="7.5" width="2.5" height="5" fill="#f0d040"/><rect x="6.5" y="7.5" width="2" height="2" fill="#f0d040"/></g>
<text x="32" y="75.6" font-size="9.2" fill="#2a2a2a" textLength="48" lengthAdjust="spacingAndGlyphs">Home Page</text>
<path d="M90.5 68.5 L98 76 M98 68.5 L90.5 76" stroke="#333" stroke-width="1"/>
<g transform="translate(119.5,65.8)"><line x1="0" y1="3.5" x2="10.5" y2="3.5" stroke="#1a3f7a" stroke-width="1"/><path d="M2.5 0.5 L2.5 6.5 L7 3.5 Z" fill="#2a6ad0"/><line x1="7.3" y1="0.5" x2="7.3" y2="6.5" stroke="#1a3f7a" stroke-width="1.2"/><line x1="0" y1="10.5" x2="10.5" y2="10.5" stroke="#1a3f7a" stroke-width="1"/><rect x="3.5" y="8" width="1.5" height="5" fill="#1a3f9a"/><rect x="5.9" y="8" width="1.5" height="5" fill="#1a3f9a"/></g>
<text x="135" y="75.1" font-size="9.4" font-weight="bold" fill="#2a3a4c" textLength="85" lengthAdjust="spacingAndGlyphs">Schematic Capture</text>
<path d="M229.5 68.5 L237.5 76 M237.5 68.5 L229.5 76" stroke="#333" stroke-width="1"/>
<line x1="1" y1="89" x2="24" y2="89" stroke="#8a9cb0" stroke-dasharray="1 2"/>
<rect x="1.5" y="94.5" width="21" height="19" fill="#d6e6f5" stroke="#9cb8d6" stroke-width="1"/>
<g transform="translate(7.5,96)"><path d="M0.5 0.5 V14 L3.5 11 L6 15.5 L8 14.5 L5.8 10 H9.5 Z" fill="#111"/></g>
<g transform="translate(4.5,117)"><path d="M5 0 L15 7 L5 13.5 Z" fill="#f4c030" stroke="#806010" stroke-width="0.7"/><path d="M0 4 H5 M0 9.5 H5 M15 7 H16" stroke="#333" stroke-width="1"/></g>
<g transform="translate(4,136)"><path d="M7.5 0 V15.5 M0 7.7 H15" stroke="#3a70b0" stroke-width="1.6"/><rect x="4.5" y="4.7" width="6" height="6" fill="#1a3c8a"/></g>
<g transform="translate(4,158.5)"><rect x="0.5" y="0.5" width="15" height="10" fill="none" stroke="#333" stroke-width="0.8" stroke-dasharray="1.5 1"/><text x="8" y="8.5" font-size="7.5" fill="#333" text-anchor="middle" textLength="12" lengthAdjust="spacingAndGlyphs">LBL</text></g>
<g transform="translate(5,176.5)"><path d="M0 1 H5 M7 1 H13 M0 4 H13 M0 7 H13 M0 13.5 H13" stroke="#555" stroke-width="1.2"/><rect x="0" y="9" width="13" height="2.5" fill="#888"/></g>
<g transform="translate(4,197.3)"><rect x="0" y="4" width="16" height="5" fill="#1a5ad0"/><path d="M4 0 V13 M11 0 V13" stroke="#1a5ad0" stroke-width="2.2"/></g>
<g transform="translate(4,218)"><rect x="2" y="1" width="12" height="12" rx="2" fill="#f4c820" stroke="#6a5000" stroke-width="0.9"/><path d="M0 4 H2 M0 10 H2 M14 4 H16 M14 10 H16" stroke="#333" stroke-width="1.4"/></g>
<line x1="2" y1="236" x2="23" y2="236" stroke="#f6f9fc"/><line x1="2" y1="235" x2="23" y2="235" stroke="#b9cbdd"/>
<g transform="translate(5,240)"><path d="M0.5 0.5 H12 L15 3 L12 5.5 H0.5 Z M15 8 H3.5 L0.5 10.5 L3.5 13 H15 Z" fill="#f4c020" stroke="#8a6a00" stroke-width="0.8"/></g>
<g transform="translate(4,261)"><path d="M6 0.5 L13 5.5 L6 10.5 Z" fill="none" stroke="#30b040" stroke-width="1"/><path d="M0 3 H4 M0 8 H4 M13 5.5 H16" stroke="#333" stroke-width="0.9" stroke-dasharray="1.5 1"/></g>
<g transform="translate(4.5,280)"><path d="M0.5 0 V13.5 H16" fill="none" stroke="#333" stroke-width="1"/><path d="M2 15 H15" stroke="#333" stroke-width="0.8" stroke-dasharray="1 1"/><path d="M1 6 C3 -1 5 1 7 6 S11 12 15 5" fill="none" stroke="#d02020" stroke-width="1"/><path d="M1 10 C4 5 7 12 10 8 S13 7 15 9" fill="none" stroke="#2040d0" stroke-width="1"/></g>
<g transform="translate(4.5,298.5)"><rect x="0.5" y="0.5" width="15" height="15" fill="#fff" stroke="#2a50a8" stroke-width="1"/><rect x="0.5" y="0.5" width="15" height="3.5" fill="#2a50a8"/><path d="M2 2.2 H3 M4 2.2 H5 M6 2.2 H7" stroke="#fff"/></g>
<g transform="translate(4.5,319.4)"><circle cx="7.5" cy="7" r="6.8" fill="#b8c4d0" stroke="#8090a0" stroke-width="0.6"/><path d="M1.5 8 C4 1 6 2 7.5 7 S11 13 13.5 6" fill="none" stroke="#1a2ab8" stroke-width="1.8"/></g>
<g transform="translate(4.5,340)"><path d="M0.5 13 L9 5 L11 7 L2.5 15 Z" fill="#f4c040" stroke="#705010" stroke-width="0.8"/><path d="M10 6 C11 1 14 0 15 3 C16 6 14 9 15.5 12" fill="none" stroke="#333" stroke-width="0.8"/></g>
<g transform="translate(4.5,359.6)"><path d="M0.5 7 A7.5 7.5 0 0 1 15.5 7 V8 H0.5 Z" fill="#fff" stroke="#233d7a" stroke-width="1.2"/><path d="M8 7.5 L11 2.5" stroke="#d02020" stroke-width="1"/><rect x="2" y="8" width="12" height="6" fill="#444"/><rect x="8" y="9" width="4" height="4" fill="#c8b048"/></g>
<line x1="2" y1="378.5" x2="23" y2="378.5" stroke="#b9cbdd"/><line x1="2" y1="379.5" x2="23" y2="379.5" stroke="#f6f9fc"/>
<g transform="translate(4.5,382)"><path d="M0.5 14.5 L14.5 0.5" stroke="#111" stroke-width="1.4"/></g>
<g transform="translate(5,402.8)"><rect x="0.5" y="0.5" width="13.5" height="12.5" fill="#2aaa96" stroke="#1a6a5e" stroke-width="0.8"/></g>
<g transform="translate(4.5,421.7)"><circle cx="7.5" cy="7.5" r="7" fill="#2aaa96" stroke="#1a6a5e" stroke-width="0.8"/></g>
<g transform="translate(4.5,442.2)"><path d="M0.5 0.5 H5 A9 13 0 0 1 14 13 H0.5 Z" fill="#f4f6fc" stroke="#6a6ab0" stroke-width="0.9"/></g>
<g transform="translate(4,462.3)"><circle cx="5" cy="5.5" r="4.8" fill="#2aaa96"/><circle cx="11" cy="8" r="4.6" fill="#2aaa96"/><circle cx="6" cy="9" r="3.6" fill="#2aaa96"/></g>
<text x="12" y="495.8" font-family="Liberation Serif" font-size="16.5" fill="#111" text-anchor="middle">A</text>
<g transform="translate(5,502.4)"><rect x="0.5" y="0.5" width="13.5" height="13" fill="#2aaa96" stroke="#1a4a40" stroke-width="1"/><text x="7.2" y="11" font-size="10.5" font-weight="bold" fill="#111" text-anchor="middle">S</text></g>
<g transform="translate(4,521.2)"><path d="M8 0 V16 M0 8 H16" stroke="#111" stroke-width="1.4"/><rect x="4.5" y="4.5" width="7" height="7" fill="#2aaa96" stroke="#1a6a5e" stroke-width="0.6"/><path d="M8 4 V12 M4 8 H12" stroke="#111" stroke-width="1.2"/></g>
<rect x="0" y="542" width="25" height="16" fill="#f2f6fb"/><line x1="0" y1="542.5" x2="25" y2="542.5" stroke="#c8d6e4" stroke-dasharray="1 1"/>
<g transform="translate(4.5,563.5)"><path d="M12.5 10.5 A6 6 0 1 1 11.5 3" fill="none" stroke="#2a70c0" stroke-width="2.4"/><path d="M9 0 L15.5 1.5 L12 6.5 Z" fill="#2a70c0"/></g>
<g transform="translate(5,583.5)"><path d="M2.5 3 A6 6 0 1 1 3.5 10.5" fill="none" stroke="#2a70c0" stroke-width="2.4"/><path d="M0 0 L6.5 1 L3 6 Z" fill="#2a70c0"/></g>
<rect x="1.5" y="602" width="22.5" height="12" fill="#fff"/><text x="2" y="611.5" font-size="9" fill="#333">0&#176;</text>
<rect x="0" y="614" width="25" height="3" fill="#dde6ef"/>
<g transform="translate(4.5,624)"><path d="M0 4.5 L5 0 V3 H11 V0 L16 4.5 L11 9 V6 H5 V9 Z" fill="#2a78c8" stroke="#1a5aa0" stroke-width="0.5"/></g>
<g transform="translate(8,640.5)"><path d="M4.5 0 L9 5 H6 V11 H9 L4.5 16 L0 11 H3 V5 H0 Z" fill="#2a78c8" stroke="#1a5aa0" stroke-width="0.5"/></g>
<rect x="32.6" y="92.3" width="66.6" height="56" fill="none" stroke="#46448e" stroke-width="1.1"/>
<rect x="36.2" y="107.2" width="46.8" height="27.8" fill="none" stroke="#5ac25a" stroke-width="1.1"/>
<g fill="none" stroke="#222" stroke-width="0.9"><path d="M45.3 111.5 V115.5 H49.5 V111.5"/><rect x="52.8" y="113.2" width="5.6" height="3.6" rx="0.8" stroke="#666"/><path d="M61.5 114.2 H67.5 V118.5" stroke="#444"/><path d="M55.8 119 V120.3 H67.8" stroke="#666" stroke-width="1.1"/><path d="M58.3 120.3 V123.5" stroke="#222"/><path d="M62.5 112.5 H64" stroke="#222"/></g><path d="M66.3 117.8 H68.8 L67.5 119.5 Z M57.3 122.5 H59.5 L58.4 124 Z" fill="#111"/><ellipse cx="43.5" cy="119.5" rx="1.6" ry="1.2" fill="#111"/><ellipse cx="44" cy="124.5" rx="2" ry="1.3" fill="#111"/><line x1="42" y1="124.3" x2="46" y2="124.3" stroke="#111" stroke-width="0.6"/>
<rect x="28" y="160" width="9.5" height="9.5" rx="1.5" fill="#1448c8"/><text x="32.7" y="168.3" font-size="9.5" font-weight="bold" fill="#fff" text-anchor="middle">C</text>
<rect x="42" y="160" width="9.5" height="9.5" rx="1.5" fill="#1448c8"/><text x="46.7" y="168.3" font-size="9.5" font-weight="bold" fill="#fff" text-anchor="middle">E</text>
<text x="57.5" y="167.8" font-size="9.3" fill="#333" textLength="45.5" lengthAdjust="spacingAndGlyphs">GRAPHICS</text>
<rect x="27" y="173" width="78" height="10.7" fill="#2f7fd6"/>
<text x="28.2" y="181.80" font-size="9" fill="#fff" >COMPONENT</text>
<text x="28.2" y="192.48" font-size="9" fill="#333" >PIN</text>
<text x="28.2" y="203.16" font-size="9" fill="#333" >PORT</text>
<text x="28.2" y="213.84" font-size="9" fill="#333" >MARKER</text>
<text x="28.2" y="224.52" font-size="9" fill="#333" >ACTUATOR</text>
<text x="28.2" y="235.20" font-size="9" fill="#333" >INDICATOR</text>
<text x="28.2" y="245.88" font-size="9" fill="#333" >VPROBE</text>
<text x="28.2" y="256.56" font-size="9" fill="#333" >IPROBE</text>
<text x="28.2" y="267.24" font-size="9" fill="#333" >TAPE</text>
<text x="28.2" y="277.92" font-size="9" fill="#333" >GENERATOR</text>
<text x="28.2" y="288.60" font-size="9" fill="#333" >TERMINAL</text>
<text x="28.2" y="299.28" font-size="9" fill="#333" >SUBCIRCUIT</text>
<text x="28.2" y="309.96" font-size="9" fill="#333" >2D GRAPHIC</text>
<text x="28.2" y="320.64" font-size="9" fill="#333" >WIRE DOT</text>
<text x="28.2" y="331.32" font-size="9" fill="#333" >WIRE</text>
<text x="28.2" y="342.00" font-size="9" fill="#333" >BUS WIRE</text>
<text x="28.2" y="352.68" font-size="9" fill="#333" >BORDER</text>
<text x="28.2" y="363.36" font-size="9" fill="#333" >TEMPLATE</text>
<line x1="3" y1="665" x2="3" y2="686" stroke="#8a9cb0" stroke-dasharray="1 2"/>
<g transform="translate(14,668)"><path d="M0 0 L15.5 7.5 L0 15 Z" fill="#1a4ad8"/></g>
<g transform="translate(43,668)"><rect x="0" y="0" width="2.5" height="15" fill="#1a4ad8"/><path d="M4 0 L16 7.5 L4 15 Z" fill="#1a4ad8"/></g>
<g transform="translate(75,668)"><rect x="0" y="0" width="4" height="15" fill="#1a4ad8"/><rect x="7" y="0" width="4" height="15" fill="#1a4ad8"/></g>
<rect x="102" y="668" width="16" height="15" fill="#1a3ef0"/>
<line x1="127" y1="666" x2="127" y2="684" stroke="#b4c6d8"/>
<circle cx="142.8" cy="675.5" r="7.8" fill="#1aa82a"/><circle cx="142.8" cy="673.5" r="5.8" fill="#34c444" opacity="0.6"/><circle cx="142.8" cy="671.3" r="1.3" fill="#fff"/><path d="M140.8 673.8 H144.2 V679.5 H145.2 V680.6 H140.5 V679.5 H141.5 V674.9 H140.8 Z" fill="#fff"/>
<text x="154.5" y="679" font-size="9" fill="#1a1a1a" textLength="54.5" lengthAdjust="spacingAndGlyphs">8 Message(s)</text>
<line x1="213" y1="664" x2="213" y2="686" stroke="#c0d0e0"/><line x1="219" y1="665" x2="219" y2="686" stroke="#8a9cb0" stroke-dasharray="1 2"/>
<text x="224.5" y="679" font-size="9" fill="#1a1a1a" textLength="49.5" lengthAdjust="spacingAndGlyphs">Root sheet 1</text>
<line x1="490" y1="664" x2="490" y2="686" stroke="#c0d0e0"/><line x1="497" y1="665" x2="497" y2="686" stroke="#8a9cb0" stroke-dasharray="1 2"/>
<text x="852.5" y="678.5" font-size="8.3" fill="#1a1a1a" textLength="25.5" lengthAdjust="spacingAndGlyphs">+500.0</text>
<text x="1225" y="678.5" font-size="8.3" fill="#1a1a1a" textLength="31" lengthAdjust="spacingAndGlyphs">+1400.0</text>
<text x="1270.5" y="678.5" font-size="8.3" fill="#2a2ab0">th</text>
<g transform="translate(13,696)"><path d="M0 2 L6.3 1.1 V6.6 H0 Z M7.3 1 L14.5 0 V6.6 H7.3 Z M0 7.6 H6.3 V13 L0 12.1 Z M7.3 7.6 H14.5 V14.2 L7.3 13.1 Z" fill="#fff"/></g>
<circle cx="62.5" cy="703" r="10" fill="#1e4a9a"/><circle cx="63" cy="702" r="8.3" fill="#4a86d8"/><path d="M54 699.5 L62 704.5 L70 699.5 V708.5 H55.5 Z" fill="#f4f6fa"/><path d="M54 699.5 L62 704.5 L70 699.5" fill="none" stroke="#9ab" stroke-width="0.7"/>
<rect x="94" y="693" width="20.5" height="20.5" rx="3" fill="#1ab01a"/><ellipse cx="104.2" cy="702.5" rx="7.5" ry="6" fill="#fff"/><path d="M103 707 L101 711 L107 707 Z" fill="#fff"/><text x="104.2" y="704.8" font-size="5.5" font-weight="bold" fill="#1ab01a" text-anchor="middle">LINE</text>
<g fill="#f0f0f0"><rect x="135" y="697" width="9" height="7.5" rx="1"/><rect x="145.5" y="697" width="9" height="7.5" rx="1"/><rect x="140" y="704.5" width="9" height="7.5" rx="1"/></g><g fill="#c44"><rect x="138" y="699" width="2" height="2"/><rect x="149" y="699" width="2" height="2"/><rect x="143" y="707" width="2" height="2"/></g>
<rect x="176.5" y="693.5" width="20" height="20" fill="#000" stroke="#2a2a2a"/><circle cx="186.5" cy="700" r="4" fill="#f4c020"/><path d="M184 698 L189 702 M189 698 L184 702" stroke="#222" stroke-width="0.8"/><text x="186" y="711" font-size="6.5" font-weight="bold" fill="#f4c020" text-anchor="middle">ERP</text>
<rect x="217.5" y="692.8" width="20.5" height="20.5" rx="3.5" fill="#3a8ef0"/><path d="M221.5 699 L224.5 708 L228 701.5 L231.5 708 L234.5 699" fill="none" stroke="#fff" stroke-width="1.8"/>
<rect x="259" y="692.8" width="20.5" height="20.5" rx="3" fill="#4aa818"/><path d="M274 698 H266.5 A1.5 1.5 0 0 0 265 699.5 V706.5 A1.5 1.5 0 0 0 266.5 708 H274" fill="none" stroke="#fff" stroke-width="2.6"/>
<circle cx="310" cy="703" r="10" fill="#db4437"/><path d="M310 703 L318.7 698 A10 10 0 0 1 305 711.7 Z" fill="#f4c20d"/><path d="M310 703 L305 711.7 A10 10 0 0 1 301.3 698 Z" fill="#0f9d58"/><circle cx="310" cy="703" r="4.6" fill="#fff"/><circle cx="310" cy="703" r="3.6" fill="#4285f4"/>
<path d="M342 696 H349 L350.5 698 H362 V711 H342 Z" fill="#f4d27a"/><rect x="342" y="699.5" width="20" height="11.5" fill="#f8dc8a"/><path d="M348 711 V706 H356 V711" fill="none" stroke="#3a9ad8" stroke-width="2.4"/>
<rect x="383" y="692.8" width="20.5" height="20.5" rx="3" fill="#e8503a"/><path d="M398 698 H390.5 A1.5 1.5 0 0 0 389 699.5 V706.5 A1.5 1.5 0 0 0 390.5 708 H398" fill="none" stroke="#fff" stroke-width="2.6"/>
<rect x="414" y="687" width="41" height="33" fill="#3b3b3d"/>
<g transform="translate(424.5,694)"><ellipse cx="10" cy="9" rx="10" ry="4" fill="none" stroke="#b8a070" stroke-width="1" transform="rotate(30 10 9)"/><ellipse cx="10" cy="9" rx="10" ry="4" fill="none" stroke="#b8a070" stroke-width="1" transform="rotate(-30 10 9)"/><circle cx="10" cy="9" r="4.5" fill="#2a3a88"/><circle cx="9" cy="8" r="2" fill="#7a9ae0"/></g>
<rect x="211" y="718" width="34" height="2" fill="#8cc0ec"/>
<rect x="252" y="718" width="35" height="2" fill="#8cc0ec"/>
<rect x="294" y="718" width="34" height="2" fill="#8cc0ec"/>
<rect x="335" y="718" width="35" height="2" fill="#8cc0ec"/>
<rect x="376" y="718" width="35" height="2" fill="#8cc0ec"/>
<rect x="414" y="718" width="41" height="2" fill="#8cc0ec"/>
<g fill="none" stroke="#eee" stroke-width="1"><circle cx="1025.5" cy="699" r="2.5"/><path d="M1021 706 A4.5 4.5 0 0 1 1030 706"/><circle cx="1020" cy="702.5" r="2.3"/><path d="M1016.5 709 A3.8 3.8 0 0 1 1023.5 709"/></g>
<path d="M1048 706 L1053.5 700.5 L1059 706" fill="none" stroke="#eee" stroke-width="1.1"/>
<rect x="1067.5" y="698.5" width="12" height="7" fill="none" stroke="#eee"/><rect x="1068.5" y="699.5" width="6" height="5" fill="#eee"/><rect x="1079.5" y="700.5" width="1.2" height="3" fill="#eee"/>
<path d="M1086.5 700 H1089 L1092.5 697 V709 L1089 706 H1086.5 Z" fill="none" stroke="#eee" stroke-width="0.9"/><path d="M1094.5 700 A4 4 0 0 1 1094.5 706 M1097 698 A7 7 0 0 1 1097 708" fill="none" stroke="#eee" stroke-width="0.9"/>
<path d="M1109 708 A11 11 0 0 1 1120 697 M1111.5 708 A8.5 8.5 0 0 1 1120 699.5 M1114 708 A6 6 0 0 1 1120 702 M1116.5 708 A3.5 3.5 0 0 1 1120 704.5" fill="none" stroke="#ccc" stroke-width="0.8"/><circle cx="1118.5" cy="707" r="1.2" fill="#eee"/>
<rect x="1126.5" y="698.5" width="20.5" height="11" rx="1" fill="none" stroke="#eee"/><path d="M1129 701.5 H1145 M1129 704 H1145 M1132 707 H1142" stroke="#ccc" stroke-width="0.9" stroke-dasharray="1 1"/>
<text x="1156" y="708" font-size="9.5" fill="#f0f0f0" textLength="19" lengthAdjust="spacingAndGlyphs">ENG</text>
<text x="1188" y="700" font-size="9.5" fill="#f0f0f0" textLength="40" lengthAdjust="spacingAndGlyphs">10:35 PM</text>
<text x="1188" y="716" font-size="9.5" fill="#f0f0f0" textLength="40" lengthAdjust="spacingAndGlyphs">3/6/2019</text>
<path d="M1245.5 696.5 H1259.5 V707 H1255 L1252.5 710 L1250 707 H1245.5 Z" fill="none" stroke="#eee" stroke-width="1"/>
</svg>
</body></html>
